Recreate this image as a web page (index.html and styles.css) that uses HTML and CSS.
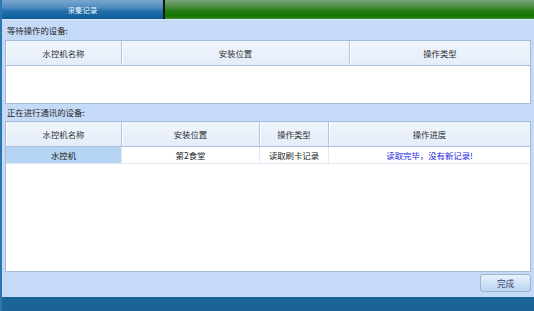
FILE: index.html
```html
<!DOCTYPE html>
<html lang="zh">
<head>
<meta charset="utf-8">
<link rel="stylesheet" href="styles.css">
</head>
<body>
<div class="app">
  <div class="tabbar">
    <div class="tab">采集记录</div>
    <div class="tab-sep"></div>
    <div class="tab-rest"></div>
  </div>
  <div class="content">
    <div class="label">等待操作的设备:</div>
    <div class="grid grid-wait">
      <div class="row head">
        <div class="cell c1">水控机名称</div>
        <div class="cell w-c2">安装位置</div>
        <div class="cell w-c3">操作类型</div>
      </div>
    </div>
    <div class="label label-2">正在进行通讯的设备:</div>
    <div class="grid grid-comm">
      <div class="row head">
        <div class="cell c1">水控机名称</div>
        <div class="cell m-c2">安装位置</div>
        <div class="cell m-c3">操作类型</div>
        <div class="cell m-c4">操作进度</div>
      </div>
      <div class="row data">
        <div class="cell c1 sel">水控机</div>
        <div class="cell m-c2">第2食堂</div>
        <div class="cell m-c3">读取刷卡记录</div>
        <div class="cell m-c4 progress">读取完毕，没有新记录!</div>
      </div>
    </div>
    <div class="actions">
      <button class="btn">完成</button>
    </div>
  </div>
  <div class="footer"></div>
</div>
</body>
</html>
```

FILE: styles.css
```css
* { box-sizing: border-box; }
html, body { margin: 0; padding: 0; }
body {
  width: 534px;
  height: 311px;
  overflow: hidden;
  font-family: "Noto Sans CJK SC", "Noto Sans", sans-serif;
  color: #2a2a2a;
  background: #c4daf6;
}
.app {
  height: 311px;
  display: flex;
  flex-direction: column;
  border-left: 2px solid #2b78b0;
}
.tabbar {
  height: 19px;
  display: flex;
  flex: none;
}
.tab {
  width: 161px;
  background: linear-gradient(#7aa6cc 0%, #4f8cc0 40%, #1f6eaa 60%, #0d5d98 100%);
  color: #eef4fb;
  font-size: 7.4px;
  display: flex;
  align-items: center;
  justify-content: center;
}
.tab-sep {
  width: 2px;
  background: #0c1a10;
}
.tab-rest {
  flex: 1;
  background: linear-gradient(#7aa47a 0%, #4a8c42 35%, #1f7a10 60%, #167200 85%, #3d8f30 100%);
}
.content {
  flex: 1;
  display: flex;
  flex-direction: column;
  padding: 0 3px 0 3px;
  border-top: 1px solid #d8e6f8;
}
.label {
  height: 20px;
  font-size: 8.4px;
  line-height: 20px;
  padding-left: 2px;
  color: #262626;
}
.label-2 {
  height: 17px;
  line-height: 17px;
}
.grid {
  background: #fff;
  border: 1px solid #a5bbd8;
  display: flex;
  flex-direction: column;
}
.grid-wait { height: 64px; }
.grid-comm { height: 151px; }
.row { display: flex; }
.head {
  height: 25px;
  background: linear-gradient(#f0f5fc, #e4edf9);
  border-bottom: 1px solid #a9bedb;
}
.data {
  height: 17px;
  border-bottom: 1px solid #dfe9f6;
}
.cell {
  display: flex;
  align-items: center;
  justify-content: center;
  font-size: 8.4px;
  border-right: 1px solid #b0c4de;
  color: #2e2e2e;
}
.head .cell { box-shadow: inset 1px 0 0 #ffffff; }
.data .cell { color: #1a1a1a; border-right-color: #e2ebf6; }
.cell:last-child { border-right: none; flex: 1; }
.c1 { width: 116px; }
.w-c2 { width: 228px; }
.w-c3 { flex: 1; }
.m-c2 { width: 138px; }
.m-c3 { width: 69px; }
.m-c4 { flex: 1; }
.sel { background: #b6d4f4; }
.progress { color: #1a1adf !important; }
.actions {
  flex: 1;
  display: flex;
  justify-content: flex-end;
  align-items: flex-start;
  padding-top: 2px;
}
.btn {
  width: 51px;
  height: 18px;
  border: 1px solid #9db4d0;
  border-radius: 3px;
  background: linear-gradient(#e8f1fc, #cfe1f6 55%, #bdd4f0);
  color: #2b3d6c;
  font-family: "Noto Sans CJK SC", sans-serif;
  font-size: 8.6px;
  padding: 0;
  margin-right: 0;
}
.footer {
  height: 14px;
  flex: none;
  background: #1a6496;
}
```
